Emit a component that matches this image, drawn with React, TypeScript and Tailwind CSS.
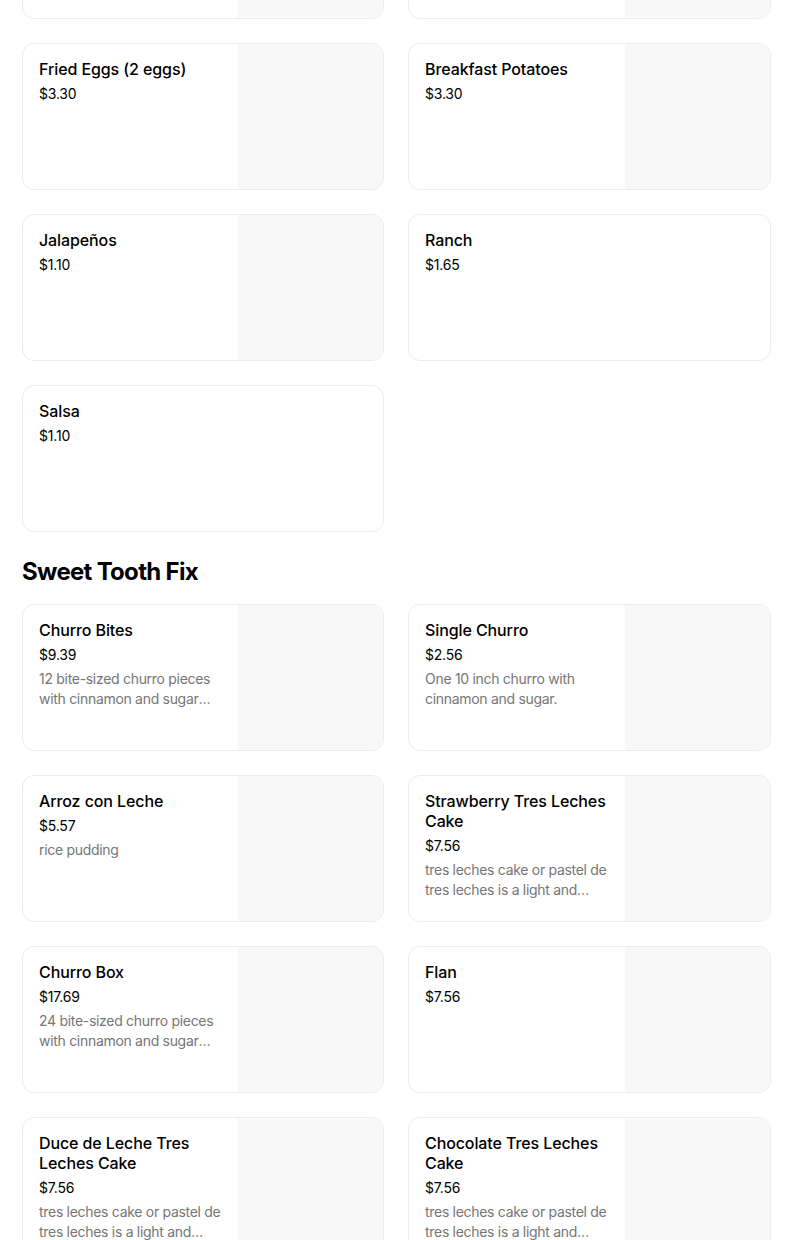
import React from "react";

type Item = { name?: string; price?: string; desc?: string; image: boolean };

const Card = ({ item }: { item: Item }) => (
  <div className="flex h-[147px] overflow-hidden rounded-[12px] border border-[#ececec] bg-white">
    <div className="flex min-w-0 flex-1 flex-col px-4 pt-[15px]">
      {item.name && (
        <div className="text-[16px] font-medium leading-[20px] tracking-[-0.1px] text-black">{item.name}</div>
      )}
      {item.price && (
        <div className="mt-[5px] text-[14px] leading-[20px] tracking-[-0.2px] text-black">{item.price}</div>
      )}
      {item.desc && (
        <div className="mt-1 line-clamp-2 text-[14px] leading-[20px] tracking-[-0.3px] text-[#767676]">{item.desc}</div>
      )}
    </div>
    {item.image && <div className="h-full w-[145px] shrink-0 bg-[#f8f8f8]" />}
  </div>
);

const Grid = ({ items }: { items: Item[] }) => (
  <div className="grid grid-cols-[362px_363px] gap-x-[24px] gap-y-[24px]">
    {items.map((it, i) => (
      <Card key={i} item={it} />
    ))}
  </div>
);

const sides: Item[] = [
  { image: true },
  { image: true },
  { name: "Fried Eggs (2 eggs)", price: "$3.30", image: true },
  { name: "Breakfast Potatoes", price: "$3.30", image: true },
  { name: "Jalapeños", price: "$1.10", image: true },
  { name: "Ranch", price: "$1.65", image: false },
  { name: "Salsa", price: "$1.10", image: false },
];

const longDesc = "tres leches cake or pastel de tres leches is a light and fluffy sponge cake soaked in three kinds of milk.";

const sweets: Item[] = [
  { name: "Churro Bites", price: "$9.39", desc: "12 bite-sized churro pieces with cinnamon and sugar with a side of chocolate sauce.", image: true },
  { name: "Single Churro", price: "$2.56", desc: "One 10 inch churro with cinnamon and sugar.", image: true },
  { name: "Arroz con Leche", price: "$5.57", desc: "rice pudding", image: true },
  { name: "Strawberry Tres Leches Cake", price: "$7.56", desc: longDesc, image: true },
  { name: "Churro Box", price: "$17.69", desc: "24 bite-sized churro pieces with cinnamon and sugar with a side of chocolate sauce.", image: true },
  { name: "Flan", price: "$7.56", image: true },
  { name: "Duce de Leche Tres Leches Cake", price: "$7.56", desc: longDesc, image: true },
  { name: "Chocolate Tres Leches Cake", price: "$7.56", desc: longDesc, image: true },
];

export default function App() {
  return (
    <div
      className="h-[1240px] w-[804px] overflow-hidden bg-white"
      style={{ fontFamily: "Inter, 'Noto Sans', sans-serif" }}
    >
      <div className="ml-[22px] mt-[-128px] w-[749px]">
        <Grid items={sides} />
        <h2 className="mt-[24px] mb-[16px] text-[24px] font-bold leading-[32px] tracking-[-0.7px] text-black">
          Sweet Tooth Fix
        </h2>
        <Grid items={sweets} />
      </div>
    </div>
  );
}
